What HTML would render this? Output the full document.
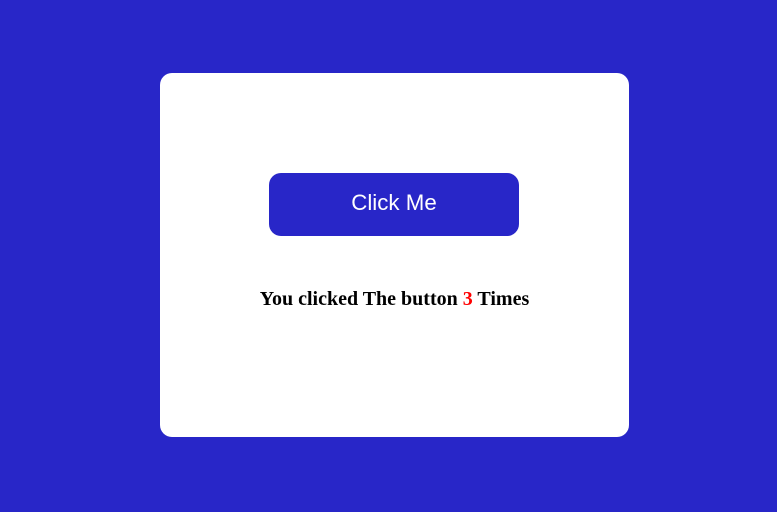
<!DOCTYPE html>
<html><head><style>
html,body{margin:0;padding:0;}
body{width:777px;height:512px;background:#2826c8;position:relative;overflow:hidden;}
.card{position:absolute;left:160px;top:73px;width:469px;height:364px;background:#fff;border-radius:12px;}
.btn{position:absolute;left:109px;top:100px;width:250px;height:63px;background:#2826c8;border-radius:12px;color:#fff;font:22.3px "Liberation Sans",sans-serif;text-align:center;line-height:59px;}
.txt{position:absolute;left:0;width:469px;top:215px;text-align:center;font:bold 20px "Liberation Serif",serif;color:#000;}
.txt span{color:red;}
</style></head><body>
<div class="card">
<div class="btn">Click Me</div>
<div class="txt">You clicked The button <span>3</span> Times</div>
</div>
</body></html>
